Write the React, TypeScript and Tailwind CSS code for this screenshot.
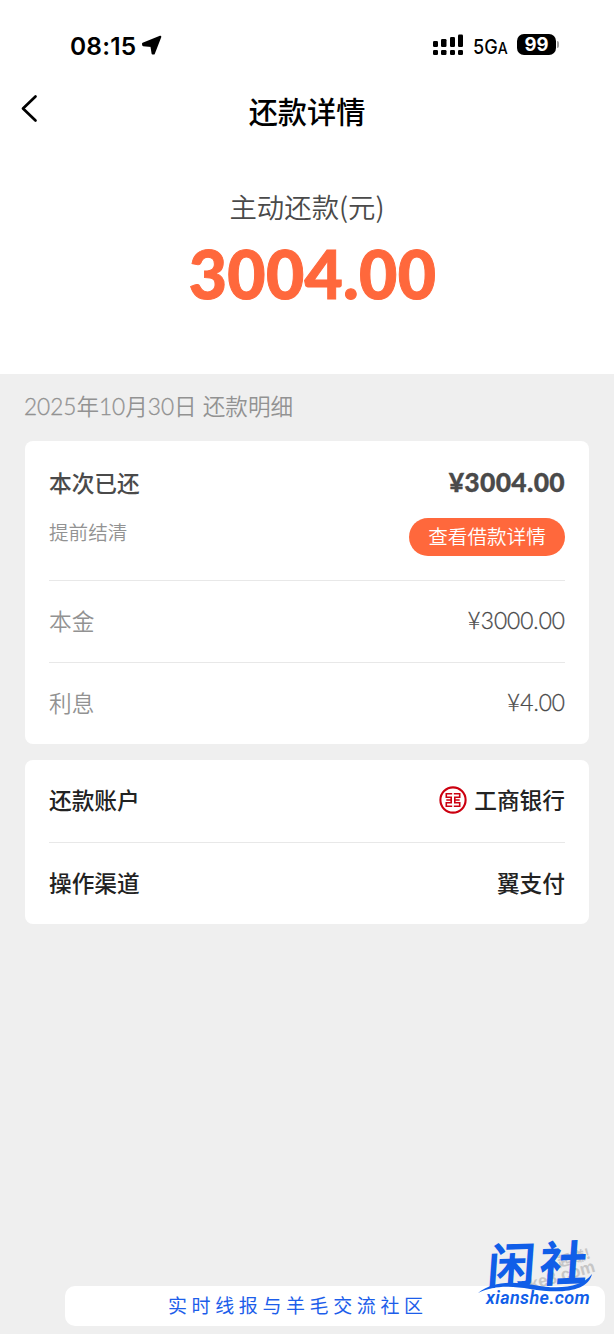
import type { ReactNode } from 'react';

const CJK = "font-['Noto_Sans_CJK_SC',sans-serif]";

function StatusBar() {
  return (
    <div className="flex h-[80px] items-start pt-[33px] pr-[55px] pl-[70px] font-['Inter','Noto_Sans_CJK_SC',sans-serif] text-black">
      <span className="w-[67px] text-[24.5px] leading-[27px] font-semibold tracking-[0.2px]">08:15</span>
      <svg className="mt-[2px] ml-[4px] h-[21px] w-[22px]" viewBox="0 0 22 21">
        <path d="M19.3 1.8 2 8.8 2.2 10.2 10.4 11 11.6 18.5 12.8 18.6Z" fill="#000" stroke="#000" strokeWidth="2" strokeLinejoin="round" />
      </svg>
      <svg className="mt-[1px] ml-auto h-[22px] w-[32px]" viewBox="0 0 32 22">
        <g fill="#000">
          <rect x="1" y="7" width="5" height="6" rx="1.2" />
          <rect x="9" y="5" width="5.5" height="8" rx="1.2" />
          <rect x="18" y="3" width="5" height="10" rx="1.2" />
          <rect x="26" y="0.5" width="5" height="12.5" rx="1.2" />
          <rect x="1" y="16" width="5" height="5" rx="1.2" />
          <rect x="9" y="16" width="5.5" height="5" rx="1.2" />
          <rect x="18" y="16" width="5" height="5" rx="1.2" />
          <rect x="26" y="16" width="5" height="5" rx="1.2" />
        </g>
      </svg>
      <span className="ml-[9px] w-[44px] text-[20.5px] leading-[27px] font-medium whitespace-nowrap">
        <span className="inline-block origin-left scale-x-[0.88]">5G<span className="text-[16px]">A</span></span>
      </span>
      <span className="mt-[1px] flex h-[21px] w-[39px] items-center justify-center rounded-[7px] bg-black text-[18.5px] font-bold text-white">99</span>
      <span className="mt-[8px] ml-[1px] h-[7px] w-[2px] rounded-r-full bg-neutral-400" />
    </div>
  );
}

function BankLogo() {
  return (
    <svg className="mr-[7px] h-[28px] w-[28px]" viewBox="0 0 28 28" fill="none" stroke="#cc0010">
      <circle cx="14" cy="14" r="12.6" strokeWidth="2.1" />
      <path d="M13.2 7.7H7.3v3.6h4.9v5.4H7.3v3.6h5.9M14.8 7.7h5.9v3.6h-4.9v5.4h4.9v3.6h-5.9M7.3 14h4.9M15.8 14h4.9" strokeWidth="1.6" />
    </svg>
  );
}

function Row({ label, children }: { label: string; children: ReactNode }) {
  return (
    <div className="flex h-[82px] items-center justify-between border-t border-[#e8e8e8] pb-[1px]">
      <span>{label}</span>
      <span className="flex items-center">{children}</span>
    </div>
  );
}

function SiteMark() {
  return (
    <div className="absolute right-[14px] bottom-[20px] h-[78px] w-[124px]">
      <span className="absolute top-[13px] left-[81px] -rotate-[16deg] text-[14px] leading-[16px] font-bold whitespace-nowrap text-[#c6c6c6]">起赚!</span>
      <span className="absolute top-[31px] left-[52px] -rotate-[16deg] font-['Liberation_Sans',sans-serif] text-[17px] leading-[18px] font-bold whitespace-nowrap text-[#c6c6c6]">ke8.com</span>
      <span className="absolute top-[-4px] left-[12px] flex origin-center -skew-x-6 -rotate-2 text-[48px] leading-[58px] font-bold tracking-[4px] text-[#105ee8]">闲社</span>
      <svg className="absolute top-[34px] left-0 h-[24px] w-[118px]" viewBox="0 0 118 24">
        <path d="M2 23C16 12 34 11 58 15C84 20 106 17 116 4C112 22 84 24 54 19C32 15 16 16 2 23Z" fill="#105ee8" />
      </svg>
      <span className="absolute top-[52px] left-[10px] font-['Roboto',sans-serif] text-[18px] leading-[20px] font-semibold tracking-[0.4px] text-[#105ee8] italic">xianshe.com</span>
    </div>
  );
}

export default function App() {
  return (
    <main className={`relative flex h-[1334px] w-[614px] flex-col overflow-hidden bg-[#efefef] ${CJK}`}>
      <header className="h-[374px] bg-white">
        <StatusBar />
        <div className="flex h-[60px] items-center">
          <svg className="mb-[2px] ml-[18px] h-[30px] w-[22px]" viewBox="0 0 22 30" fill="none" stroke="#000" strokeWidth="2.7" strokeLinecap="round" strokeLinejoin="round">
            <path d="M17.5 2.5 5 14.5 17.5 26.5" />
          </svg>
          <h1 className="flex-1 pr-[40px] text-center text-[29.2px] leading-[42px] font-medium text-black">还款详情</h1>
        </div>
        <p className="mt-[46px] text-center text-[27.4px] leading-[40px] font-[350] text-[#4a4a4a]">主动还款(元)</p>
        <p className="mt-[13px] pl-[11px] text-center font-['Lato',sans-serif] text-[66px] leading-[70px] font-black tracking-[0.3px] text-[#ff683c] [-webkit-text-stroke:1px_#ff683c]">3004.00</p>
      </header>

      <h2 className="mt-[16px] ml-[24px] font-['Lato','Noto_Sans_CJK_SC',sans-serif] text-[22.6px] leading-[34px] font-[350] text-[#929292]">
        <Digits>2025</Digits>年<Digits>10</Digits>月<Digits>30</Digits>日 还款明细
      </h2>

      <section className="mx-[25px] mt-[17px] h-[303px] rounded-[8px] bg-white px-[24px] text-[22.7px] text-[#929292]">
        <div className="h-[139px] pt-[24px]">
          <div className="flex h-[36px] items-center justify-between font-medium text-[#4a4a4a]">
            <span>本次已还</span>
            <span className="font-['Lato',sans-serif] text-[26.5px] font-black tracking-[0.3px] [-webkit-text-stroke:0.3px_#4a4a4a]">¥3004.00</span>
          </div>
          <div className="flex justify-between">
            <span className="mt-[16px] text-[19.6px] leading-[30px] font-[350]">提前结清</span>
            <button className="mt-[17px] h-[38px] w-[156px] rounded-full bg-[#ff683c] pb-[2px] text-[19.6px] font-[350] text-white">查看借款详情</button>
          </div>
        </div>
        <div className="font-[350]">
          <Row label="本金"><span className="text-[#4a4a4a]"><Digits>¥3000.00</Digits></span></Row>
          <Row label="利息"><span className="text-[#4a4a4a]"><Digits>¥4.00</Digits></span></Row>
        </div>
      </section>

      <section className="mx-[25px] mt-[16px] h-[164px] rounded-[8px] bg-white px-[24px] text-[22.7px] font-medium text-[#222] [&>div:first-child]:border-t-0">
        <Row label="还款账户"><BankLogo />工商银行</Row>
        <Row label="操作渠道">翼支付</Row>
      </section>

      <footer className="mt-auto mb-[8px] ml-[65px] flex h-[40px] w-[540px] items-center rounded-[10px] bg-white pb-[2px] pl-[103px] text-[19px] tracking-[4.6px] text-[#1d5eea]">
        实时线报与羊毛交流社区
      </footer>
      <SiteMark />
    </main>
  );
}

// Light Latin figures, thickened a touch so they sit next to the CJK text.
function Digits({ children }: { children: ReactNode }) {
  return <span className="font-['Lato',sans-serif] font-light [-webkit-text-stroke:0.3px_currentColor]">{children}</span>;
}
